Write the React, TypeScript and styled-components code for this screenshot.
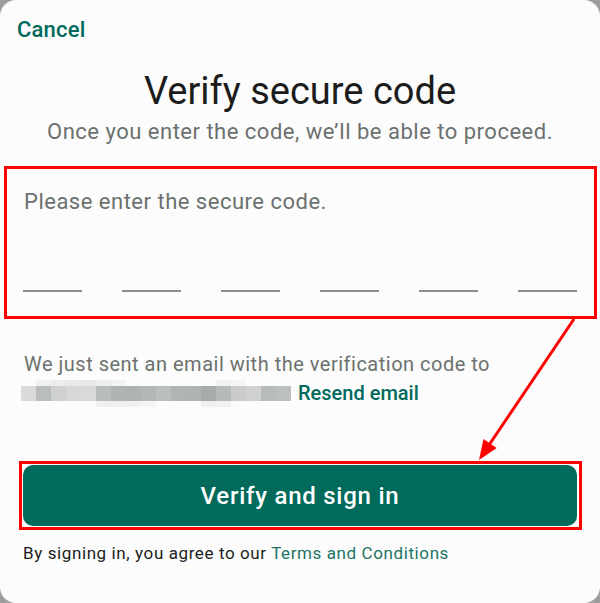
import React from "react";
import styled, { createGlobalStyle } from "styled-components";

const GlobalStyle = createGlobalStyle`
  html, body {
    margin: 0;
    padding: 0;
    background: #9e9e9e;
  }
  * {
    box-sizing: border-box;
  }
`;

const Card = styled.div`
  position: relative;
  width: 600px;
  height: 603px;
  background: #fbfcfb;
  border-radius: 16px;
  overflow: hidden;
  display: flex;
  flex-direction: column;
  font-family: Roboto, "Noto Sans", sans-serif;
`;

const Header = styled.div`
  padding: 17px 0 0 17px;
  height: 43px;
`;

const CancelButton = styled.span`
  font-size: 22px;
  line-height: 26px;
  font-weight: 500;
  letter-spacing: 0.2px;
  color: #00695c;
  cursor: pointer;
`;

const Title = styled.h1`
  margin: 26px 0 0;
  font-size: 38px;
  line-height: 44px;
  font-weight: 400;
  color: #1b1c1b;
  text-align: center;
`;

const Subtitle = styled.p`
  margin: 5px 0 0;
  font-size: 22px;
  line-height: 28px;
  letter-spacing: 0.5px;
  color: #6c716f;
  text-align: center;
`;

const CodeBox = styled.div`
  margin: 20px 3px 0 4px;
  border: 3px solid #ff0000;
  padding: 19px 17px 24px 16px;
`;

const CodeLabel = styled.div`
  font-size: 22px;
  line-height: 28px;
  letter-spacing: 0.5px;
  color: #6c716f;
  padding-left: 1px;
`;

const DigitRow = styled.div`
  margin-top: 74px;
  display: flex;
  justify-content: space-between;
`;

const DigitLine = styled.div`
  width: 59px;
  height: 2px;
  background: #8d8f8e;
`;

const EmailNote = styled.div`
  margin-top: 31px;
  padding-left: 24px;
  font-size: 20px;
  line-height: 29px;
  letter-spacing: 0.5px;
  color: #6c716f;
`;

const EmailLine = styled.div`
  display: flex;
  align-items: center;
  height: 29px;
`;

const Blurred = styled.div`
  display: grid;
  grid-template-columns: repeat(18, 15px);
  grid-template-rows: 6px 15px 6px;
  margin-left: -3px;
  margin-right: 7px;
`;

const BlurCell = styled.span<{ $c: string }>`
  background: ${(p) => p.$c};
`;

const ResendLink = styled.span`
  color: #00695c;
  font-weight: 500;
  letter-spacing: 0;
  cursor: pointer;
`;

const ButtonFrame = styled.div`
  margin: 53px 18px 0 19px;
  border: 3px solid #ff0000;
  padding: 1px 2px 1px 1px;
`;

const PrimaryButton = styled.button`
  display: block;
  width: 100%;
  height: 61px;
  border: none;
  border-radius: 10px;
  background: #016a5a;
  color: #ffffff;
  font-family: Roboto, "Noto Sans", sans-serif;
  font-size: 24px;
  font-weight: 500;
  letter-spacing: 0.75px;
  cursor: pointer;
`;

const Footer = styled.p`
  margin: 12px 0 0;
  padding-left: 23px;
  font-size: 17px;
  line-height: 22px;
  letter-spacing: 0.6px;
  color: #1b1c1b;
`;

const TermsLink = styled.span`
  color: #1d7466;
`;

const Overlay = styled.svg`
  position: absolute;
  left: 0;
  top: 0;
  pointer-events: none;
`;

const BG = "#fbfcfb";

const topRow = [
  BG, "#f1f1f1", "#ececec", "#eaeaea", "#e8e8e8", "#eeeeee", "#f3f3f3",
  BG, BG, BG, BG, BG, BG, "#f1f2f1", "#f4f5f4", BG, BG, BG,
];
const midRow = [
  "#d9dad9", "#b9bdbb", "#cfd1d0", "#d6d8d7", "#d8dad9", "#b8bcba", "#afb3b1",
  "#aeb2b0", "#b3b7b5", "#babebc", "#b1b5b3", "#afb3b1", "#a7aba9", "#b6bab8",
  "#c9cccb", "#ced1d0", "#b7bbb9", "#bbbfbd",
];
const bottomRow = [
  BG, BG, BG, BG, BG, "#eff0ef", "#eeefee", "#f0f1f0", "#f3f4f3",
  BG, BG, BG, "#eeefee", "#f0f1f0", BG, BG, BG, BG,
];

export default function App() {
  return (
    <>
      <GlobalStyle />
      <Card>
        <Header>
          <CancelButton>Cancel</CancelButton>
        </Header>
        <Title>Verify secure code</Title>
        <Subtitle>Once you enter the code, we’ll be able to proceed.</Subtitle>

        <CodeBox>
          <CodeLabel>Please enter the secure code.</CodeLabel>
          <DigitRow>
            {[0, 1, 2, 3, 4, 5].map((i) => (
              <DigitLine key={i} />
            ))}
          </DigitRow>
        </CodeBox>

        <EmailNote>
          <EmailLine>We just sent an email with the verification code to</EmailLine>
          <EmailLine>
            <Blurred>
              {[...topRow, ...midRow, ...bottomRow].map((c, i) => (
                <BlurCell key={i} $c={c} />
              ))}
            </Blurred>
            <ResendLink>Resend email</ResendLink>
          </EmailLine>
        </EmailNote>

        <ButtonFrame>
          <PrimaryButton>Verify and sign in</PrimaryButton>
        </ButtonFrame>

        <Footer>
          By signing in, you agree to our <TermsLink>Terms and Conditions</TermsLink>
        </Footer>

        <Overlay width="600" height="603" viewBox="0 0 600 603">
          <line x1="574" y1="319" x2="489" y2="445" stroke="#ff0000" strokeWidth="3" />
          <polygon points="479,460 483.5,438.9 496.7,447.9" fill="#ff0000" />
        </Overlay>
      </Card>
    </>
  );
}
